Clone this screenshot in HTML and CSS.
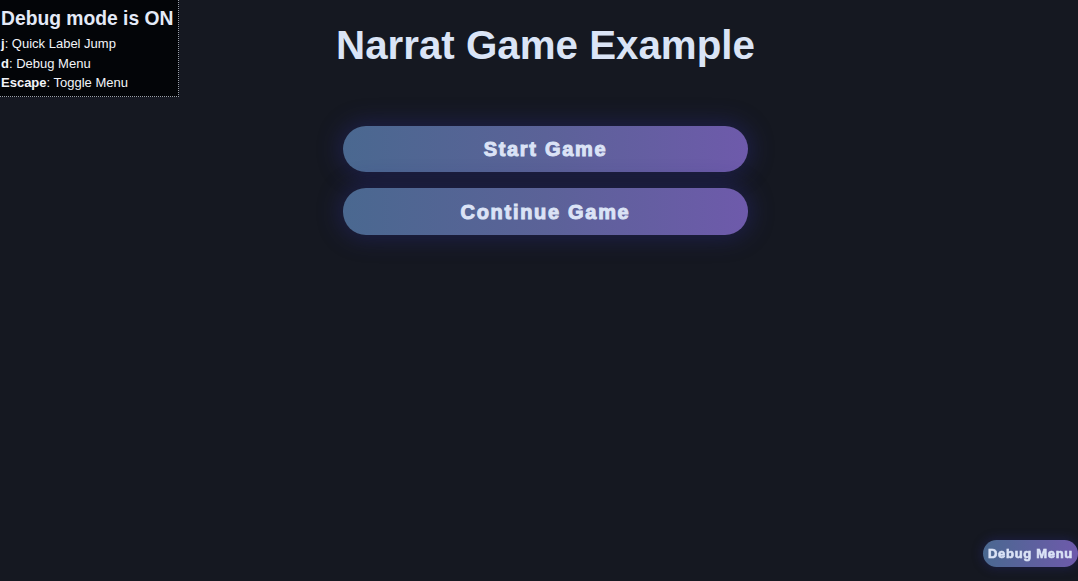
FILE: index.html
```html
<!DOCTYPE html>
<html>
<head>
<meta charset="utf-8">
<link rel="stylesheet" href="styles.css">
</head>
<body>
<div class="debug-info">
  <h3 class="debug-title">Debug mode is ON</h3>
  <div class="debug-line"><b>j</b>: Quick Label Jump</div>
  <div class="debug-line"><b>d</b>: Debug Menu</div>
  <div class="debug-line"><b>Escape</b>: Toggle Menu</div>
</div>
<main class="menu">
  <h1 class="game-title">Narrat Game Example</h1>
  <div class="menu-buttons">
    <button class="menu-button">Start Game</button>
    <button class="menu-button">Continue Game</button>
  </div>
</main>
<button class="debug-menu-button">Debug Menu</button>
</body>
</html>
```
FILE: styles.css
```css
html, body {
  margin: 0;
  padding: 0;
  height: 100%;
}
body {
  background: #151821;
  color: #dbe4f5;
  font-family: "Liberation Sans", Arial, sans-serif;
  overflow: hidden;
}
.debug-info {
  position: absolute;
  top: 0;
  left: 0;
  width: 179px;
  height: 97px;
  background: #030508;
  border-right: 1px dotted #9aa0aa;
  border-bottom: 1px dotted #9aa0aa;
  padding: 7px 0 0 1px;
  box-sizing: border-box;
  color: #ffffff;
}
.debug-title {
  margin: 0 0 3px 0;
  font-size: 19.3px;
  line-height: 24px;
  font-weight: 700;
  color: #e4eaf7;
}
.debug-line {
  font-size: 13px;
  line-height: 19.5px;
  color: #f2f4f8;
}
.debug-line b {
  font-weight: 700;
}
.menu {
  display: flex;
  flex-direction: column;
  align-items: center;
  padding-left: 13px;
}
.game-title {
  margin: 22px 0 0 0;
  font-size: 40.3px;
  line-height: 48px;
  font-weight: 700;
  color: #dae4f6;
}
.menu-buttons {
  display: flex;
  flex-direction: column;
  gap: 16px;
  margin-top: 56px;
}
.menu-button {
  width: 405px;
  height: 46px;
  border: none;
  border-radius: 23px;
  background: linear-gradient(90deg, #4a6890 0%, #5b6298 50%, #6e5aab 100%);
  color: #dbe3f6;
  font-family: "Liberation Sans", Arial, sans-serif;
  font-size: 20px;
  font-weight: 700;
  letter-spacing: 1.7px;
  -webkit-text-stroke: 1px #dbe3f6;
  box-shadow: 0 0 22px 4px rgba(40, 40, 120, 0.45);
  padding: 1px 0 0 0;
  cursor: pointer;
}
.menu-button + .menu-button {
  height: 47px;
  padding-top: 2px;
}
.debug-menu-button {
  position: fixed;
  right: 0;
  bottom: 14px;
  width: 95px;
  height: 27px;
  border: none;
  border-radius: 14px;
  background: linear-gradient(90deg, #4a6890 0%, #6e5aab 100%);
  color: #dbe3f6;
  font-family: "Liberation Sans", Arial, sans-serif;
  font-size: 13px;
  font-weight: 700;
  letter-spacing: 0.7px;
  -webkit-text-stroke: 0.6px #dbe3f6;
  padding: 0;
  box-shadow: 0 0 10px 2px rgba(40, 40, 120, 0.35);
}
```
